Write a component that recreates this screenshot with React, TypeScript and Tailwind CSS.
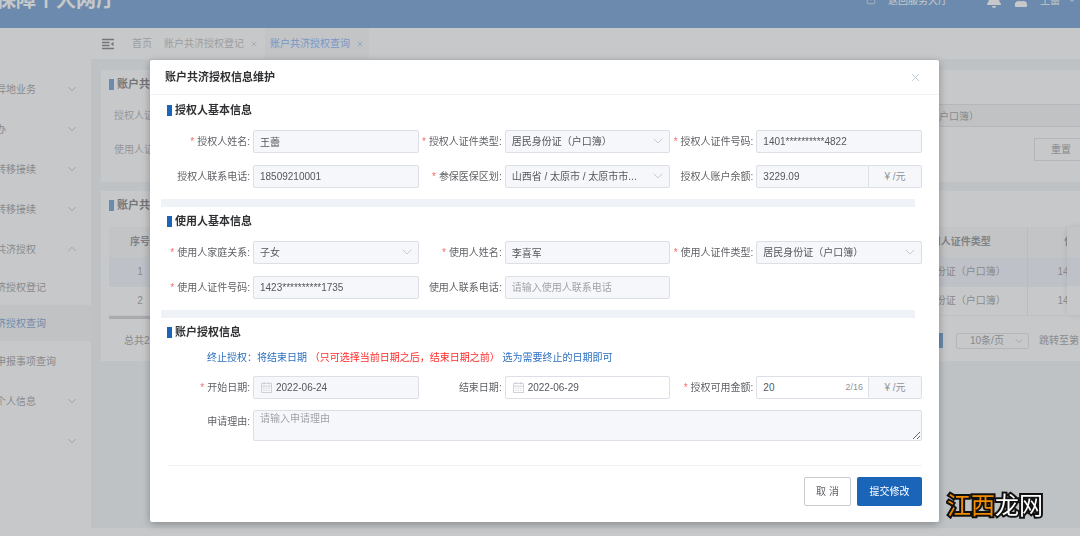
import { ChevronDown, ChevronUp, SquareArrowOutUpRight, X } from "lucide-react";
import { FaBell, FaUser } from "react-icons/fa";
import clsx from "clsx";
import type { ReactNode } from "react";

const menu = [
  { label: "异地业务", arrow: "down" },
  { label: "办", arrow: "down" },
  { label: "转移接续", arrow: "down" },
  { label: "转移接续", arrow: "down" },
  { label: "共济授权", arrow: "up" },
  { label: "济授权登记" },
  { label: "济授权查询", active: true },
  { label: "申报事项查询" },
  { label: "个人信息", arrow: "down" },
  { label: "", arrow: "down" },
];

const controlClass =
  "block h-[23px] w-full min-w-0 appearance-none rounded-[2px] border border-[#dcdfe6] pl-1.5 text-[10px] text-[#55575c] outline-none placeholder:text-[#a0a3a9]";

function CollapseIcon() {
  return (
    <svg className="h-3 w-3" viewBox="0 0 12 12" fill="none" stroke="#303133" strokeWidth="1.3">
      <path d="M0 1.5h12M0 4.5h7.5M0 7.5h7.5M0 10.5h12" />
      <path d="M11.5 3.8v4.4L8.8 6z" fill="#303133" stroke="none" />
    </svg>
  );
}

function CalendarIcon() {
  return (
    <svg
      className="pointer-events-none absolute top-1.5 left-2 h-[11px] w-[11px]"
      viewBox="0 0 12 12"
      fill="none"
      stroke="#c8ccd4"
    >
      <path d="M.5 1.5h11v10H.5zM.5 4.5h11M3.5 0v2.5M8.5 0v2.5" />
      <path d="M2.5 6.8h7M2.5 9.2h7" strokeDasharray="1.4 1.4" />
    </svg>
  );
}

function Title({ children }: { children: ReactNode }) {
  return (
    <h3 className="flex h-4 items-center gap-[3px] text-[11px] font-bold text-[#303133]">
      <span className="h-[11px] w-[5px] bg-[#1b65b9]" />
      {children}
    </h3>
  );
}

interface FieldProps {
  id: string;
  label: string;
  required?: boolean;
  children: ReactNode;
  className?: string;
}

function Field({ id, label, required, children, className }: FieldProps) {
  return (
    <div className={clsx("flex items-start", className)}>
      <label
        htmlFor={id}
        className="flex h-[23px] w-[86px] shrink-0 items-center justify-end gap-[3px] pr-[3px] whitespace-nowrap text-[#606266]"
      >
        {required && <span className="text-[#f56c6c]">*</span>}
        <span>{label}:</span>
      </label>
      <div className="relative flex min-w-0 flex-1">{children}</div>
    </div>
  );
}

function TextField(props: {
  id: string;
  label: string;
  value?: string;
  placeholder?: string;
  required?: boolean;
}) {
  return (
    <Field id={props.id} label={props.label} required={props.required}>
      <input
        id={props.id}
        className={clsx(controlClass, "bg-[#f5f7fa]")}
        defaultValue={props.value}
        placeholder={props.placeholder}
        readOnly
      />
    </Field>
  );
}

function SelectField(props: { id: string; label: string; value: string; required?: boolean }) {
  return (
    <Field id={props.id} label={props.label} required={props.required}>
      <select id={props.id} className={clsx(controlClass, "bg-[#f5f7fa] pr-6")}>
        <option>{props.value}</option>
      </select>
      <ChevronDown
        size={16}
        strokeWidth={1.5}
        className="pointer-events-none absolute top-[3px] right-1 text-[#c8ccd4]"
      />
    </Field>
  );
}

function DateField(props: { id: string; label: string; value: string; required?: boolean; locked?: boolean }) {
  return (
    <Field id={props.id} label={props.label} required={props.required}>
      <input
        id={props.id}
        className={clsx(controlClass, "indent-4", props.locked ? "bg-[#f5f7fa]" : "bg-white")}
        defaultValue={props.value}
        readOnly={props.locked}
      />
      <CalendarIcon />
    </Field>
  );
}

function Unit() {
  return (
    <span className="flex h-[23px] w-[53px] shrink-0 items-center justify-center rounded-r-[2px] border border-l-0 border-[#dcdfe6] bg-[#f5f7fa] text-[#909399]">
      ¥ /元
    </span>
  );
}

function TopBar() {
  return (
    <header className="-mt-7 flex h-14 shrink-0 items-center bg-[#1b65b9] text-white">
      <h1 className="-ml-1 flex-1 text-[20px] font-bold">保障个人网厅</h1>
      <div className="flex items-center pr-0.5">
        <a href="#" className="flex items-center gap-3">
          <SquareArrowOutUpRight size={10} strokeWidth={1.5} />
          返回服务大厅
        </a>
        <FaBell size={16} className="ml-[38px]" />
        <FaUser size={14} className="ml-3" />
        <span className="ml-3">王蕾</span>
        <ChevronDown size={12} className="ml-1.5" />
      </div>
    </header>
  );
}

function Sidebar() {
  return (
    <nav className="-ml-1 w-[95px] shrink-0 bg-white pt-[41px] text-[#606266]">
      {menu.map((item, i) => (
        <a
          key={i}
          href="#"
          className={clsx(
            "flex items-center justify-between pr-3",
            item.label.startsWith("济") ? "h-9" : "h-10",
            item.active && "bg-[#f0f0f0] text-[#1b65b9]",
          )}
        >
          <span className="whitespace-nowrap">{item.label}</span>
          {item.arrow === "down" && <ChevronDown size={14} strokeWidth={1.5} className="text-[#909399]" />}
          {item.arrow === "up" && <ChevronUp size={14} strokeWidth={1.5} className="text-[#909399]" />}
        </a>
      ))}
    </nav>
  );
}

function PageTabs() {
  return (
    <div className="flex h-[31px] items-center bg-white pl-[11px] text-[#909399]">
      <button type="button" aria-label="菜单">
        <CollapseIcon />
      </button>
      <a href="#" className="ml-[18px]">
        首页
      </a>
      <a href="#" className="ml-3 flex items-center gap-1.5">
        账户共济授权登记 <X size={8} />
      </a>
      <a href="#" className="ml-[7px] flex h-full items-center gap-1.5 bg-[#f3f4f6] px-[5px] text-[#2f86ff]">
        账户共济授权查询 <X size={8} />
      </a>
    </div>
  );
}

function QueryCard() {
  return (
    <section className="bg-white px-2 pt-1.5 pb-[21px] text-[#808389]">
      <Title>账户共</Title>
      <div className="mt-3 flex h-[23px] items-center justify-between pl-[5px]">
        <label htmlFor="q-type">授权人证</label>
        <input
          id="q-type"
          className="h-[23px] w-[220px] border border-[#d3d5da] bg-[#f0f1f3] pl-1.5 text-[#606266]"
          defaultValue="居民身份证（户口簿）"
          readOnly
        />
      </div>
      <div className="mt-[11px] flex h-[23px] items-center justify-between pl-[5px]">
        <span>使用人证</span>
        <button
          type="button"
          className="h-[23px] w-[58px] border border-[#cfd1d6] pr-3 pl-2 text-[#606266]"
        >
          重置
        </button>
      </div>
    </section>
  );
}

function ResultCard() {
  return (
    <section className="mt-[9px] bg-white pt-1.5 pb-3 pl-2 text-[#606266]">
      <Title>账户共</Title>
      <div className="mt-3.5 flex">
        <div className="min-w-0 flex-1 overflow-hidden">
          <table className="w-[1062px] table-fixed text-center">
            <thead>
              <tr className="h-[30px] border-b border-[#ebeef5] bg-[#f3f4f6] text-[#4c4f54]">
                <th className="w-[62px]">序号</th>
                <th />
                <th className="w-[142px] border-r border-[#dcdfe6]">使用人证件类型</th>
                <th className="w-[144px]">使用人证件号码</th>
              </tr>
            </thead>
            <tbody>
              <tr className="h-[29px] border-b border-[#ebeef5] bg-[#e8f0fc]">
                <td>1</td>
                <td />
                <td className="border-r border-[#dcdfe6]">居民身份证（户口簿）</td>
                <td>1401**********4822</td>
              </tr>
              <tr className="h-[29px] border-b border-[#ebeef5]">
                <td>2</td>
                <td />
                <td className="border-r border-[#dcdfe6]">居民身份证（户口簿）</td>
                <td>1401**********4822</td>
              </tr>
            </tbody>
          </table>
          <div className="h-[3px] w-1/2 bg-[#b4b6ba]" />
        </div>
        {/* pinned operation column */}
        <div className="mb-1 w-[33px] shrink-0 bg-white shadow-[0_0_5px_rgba(0,0,0,0.2)]">
          <div className="h-[30px] bg-[#f3f4f6]" />
          <div className="h-[29px] bg-[#e8f0fc]" />
        </div>
      </div>
      <div className="mt-3.5 flex h-4 items-center justify-between pl-[15px]">
        <span>总共2条</span>
        <div className="flex items-center">
          <button type="button" className="h-[15px] w-[15px] bg-[#1b65b9] text-white">
            1
          </button>
          <div className="relative ml-[13px]">
            <select
              aria-label="每页条数"
              className="h-4 w-[73px] appearance-none rounded-[2px] border border-[#cfd1d6] pl-[13px] leading-3"
            >
              <option>10条/页</option>
            </select>
            <ChevronDown size={12} className="pointer-events-none absolute top-0.5 right-1 text-[#a8abb2]" />
          </div>
          <span className="ml-2.5 w-[61px]">跳转至第</span>
        </div>
      </div>
    </section>
  );
}

function AuthDialog() {
  return (
    <div
      role="dialog"
      aria-labelledby="dialog-title"
      className="flex-1 rounded-[2px] bg-white shadow-[0_2px_8px_rgba(0,0,0,0.3)]"
    >
      <div className="flex h-[35px] items-center justify-between border-b border-[#f2f3f5] pr-[17px] pl-[15px]">
        <h2 id="dialog-title" className="text-[11px] font-bold text-[#303133]">
          账户共济授权信息维护
        </h2>
        <button type="button" aria-label="关闭">
          <X size={13} strokeWidth={1.5} className="text-[#b4c3d6]" />
        </button>
      </div>

      <form className="pt-px" onSubmit={(e) => e.preventDefault()}>
        <section className="px-[17px] pt-1.5 pb-[11px]">
          <Title>授权人基本信息</Title>
          <div className="mt-3 grid grid-cols-3 gap-y-3">
            <TextField id="name" label="授权人姓名" value="王蕾" required />
            <SelectField id="idType" label="授权人证件类型" value="居民身份证（户口簿）" required />
            <TextField id="idNo" label="授权人证件号码" value="1401**********4822" required />
            <TextField id="phone" label="授权人联系电话" value="18509210001" />
            <SelectField id="area" label="参保医保区划" value="山西省 / 太原市 / 太原市市..." required />
            <Field id="balance" label="授权人账户余额">
              <input
                id="balance"
                className={clsx(controlClass, "rounded-r-none bg-[#f5f7fa]")}
                defaultValue="3229.09"
                readOnly
              />
              <Unit />
            </Field>
          </div>
        </section>
        <div className="mr-6 ml-[11px] h-2 bg-[#eff3f7]" />

        <section className="px-[17px] pt-1.5 pb-[11px]">
          <Title>使用人基本信息</Title>
          <div className="mt-3 grid grid-cols-3 gap-y-3">
            <SelectField id="relation" label="使用人家庭关系" value="子女" required />
            <TextField id="userName" label="使用人姓名" value="李喜军" required />
            <SelectField id="userIdType" label="使用人证件类型" value="居民身份证（户口簿）" required />
            <TextField id="userIdNo" label="使用人证件号码" value="1423**********1735" required />
            <TextField id="userPhone" label="使用人联系电话" placeholder="请输入使用人联系电话" />
          </div>
        </section>
        <div className="mr-6 ml-[11px] h-2 bg-[#eff3f7]" />

        <section className="px-[17px] pt-1.5 pb-6">
          <Title>账户授权信息</Title>
          <p className="mt-2.5 pl-10 leading-4 text-[#2b6fc0]">
            终止授权：将结束日期 <span className="text-[#ff2a2a]">（只可选择当前日期之后，结束日期之前）</span>{" "}
            选为需要终止的日期即可
          </p>
          <div className="mt-2.5 grid grid-cols-3 gap-y-[11px]">
            <DateField id="start" label="开始日期" value="2022-06-24" required locked />
            <DateField id="end" label="结束日期" value="2022-06-29" />
            <Field id="amount" label="授权可用金额" required>
              <div className="relative min-w-0 flex-1">
                <input
                  id="amount"
                  className={clsx(controlClass, "rounded-r-none bg-white pr-8")}
                  defaultValue="20"
                  maxLength={16}
                />
                <span className="absolute top-1 right-1.5 text-[9px] text-[#909399]">2/16</span>
              </div>
              <Unit />
            </Field>
            <Field id="reason" label="申请理由" className="col-span-3">
              <textarea
                id="reason"
                className="h-[31px] w-full resize rounded-[2px] border border-[#dcdfe6] bg-[#f5f7fa] pl-1.5 outline-none placeholder:text-[#a0a3a9]"
                placeholder="请输入申请理由"
                readOnly
              />
            </Field>
          </div>
        </section>

        <div className="mx-[17px] flex justify-end gap-1.5 border-t border-[#f2f3f5] pt-[11px] pb-4">
          <button
            type="button"
            className="h-[29px] w-[47px] rounded-[2px] border border-[#c8cad0] bg-white text-[#606266]"
          >
            取 消
          </button>
          <button type="submit" className="h-[29px] w-[65px] rounded-[2px] bg-[#1b65b9] text-white">
            提交修改
          </button>
        </div>
      </form>
    </div>
  );
}

export default function App() {
  return (
    <div className="flex h-screen flex-col overflow-hidden bg-white font-['Liberation_Sans','Noto_Sans_CJK_SC',sans-serif] text-[10px] leading-[15px]">
      <TopBar />
      <div className="flex min-h-0 flex-1">
        <Sidebar />
        <main className="min-w-0 flex-1 bg-[#ebf1f5]">
          <PageTabs />
          <div className="-mr-5 pt-[11px] pl-2.5">
            <QueryCard />
            <ResultCard />
          </div>
        </main>
      </div>
      <footer className="h-2 shrink-0 bg-white" />

      <div className="fixed inset-0 flex items-start bg-[#a2a3a5]/60 pt-15 pr-[141px] pl-[150px]">
        <AuthDialog />
      </div>

      <div className="fixed right-[37px] bottom-[18px] text-[24px] leading-6 font-normal text-white [paint-order:stroke] [-webkit-text-stroke:4px_#111]">
        <span className="text-[#f38b00]">江西</span>龙网
      </div>
    </div>
  );
}
